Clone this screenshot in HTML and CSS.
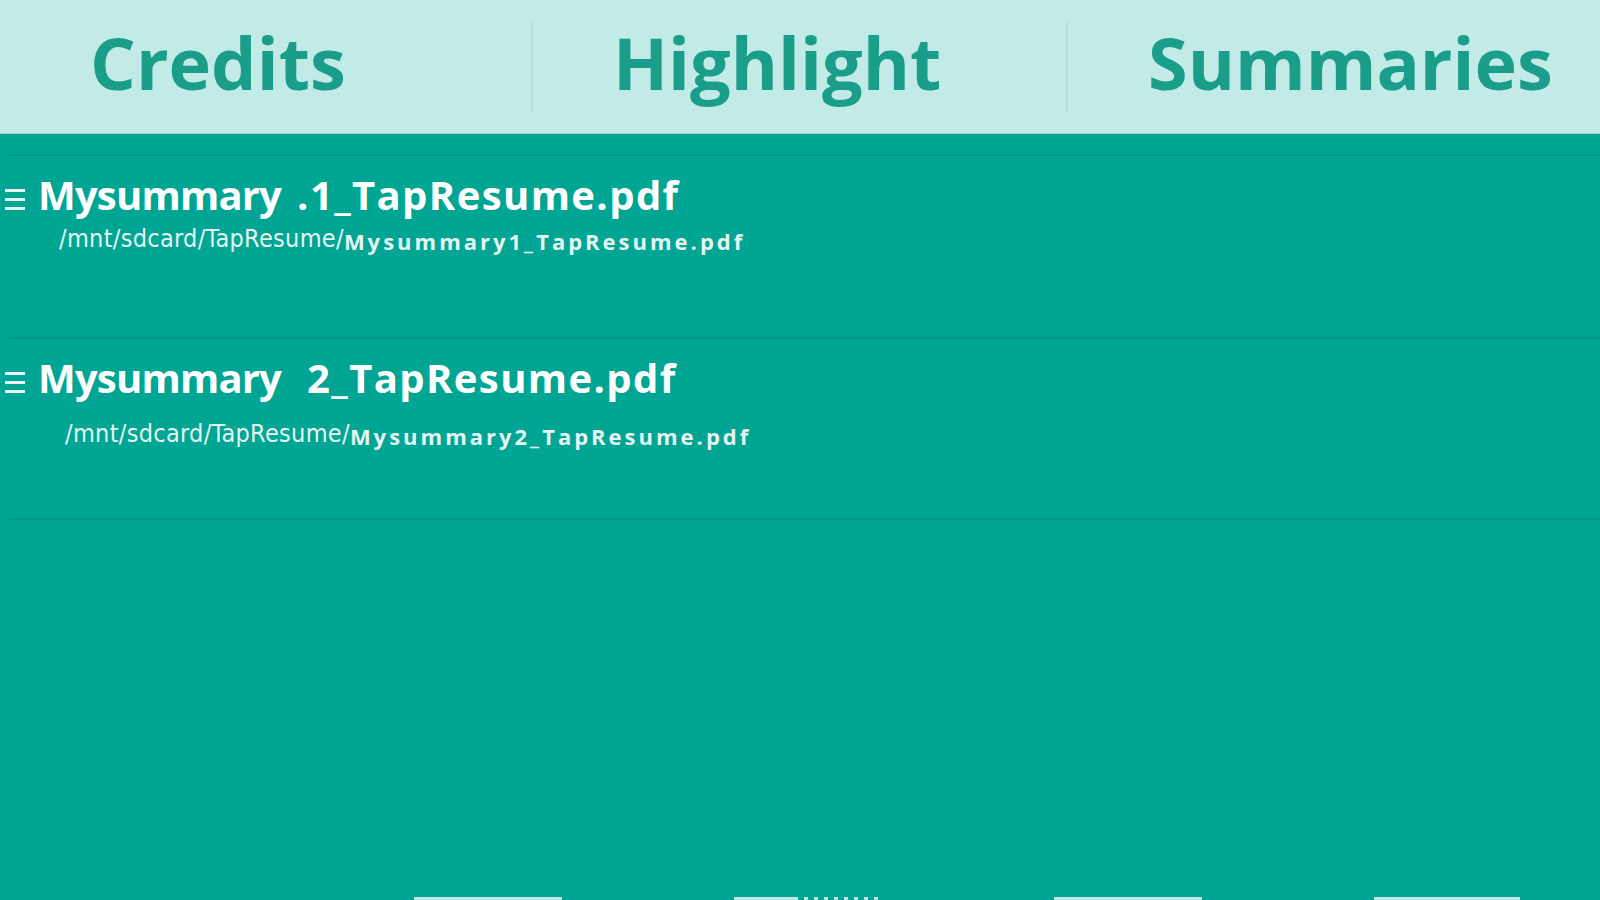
FILE: index.html
```html
<!DOCTYPE html>
<html lang="en">
<head>
  <meta charset="UTF-8" />
  <title>TapResume - Summaries</title>
  <link rel="stylesheet" href="styles.css">
</head>
<body>

<header class="tabs">
  <div class="tab tab-first">Credits</div>
  <div class="tab">Highlight</div>
  <div class="tab">Summaries</div>
</header>

<main class="list">
  <div class="row">
    <div class="row-title">
      <span class="menu-icon"><i></i><i></i><i></i></span>
      <span>Mysummary</span><span class="suffix gap-1">.1_TapResume.pdf</span>
    </div>
    <div class="row-path">
      <span class="dir">/mnt/sdcard/TapResume/</span><span class="file">Mysummary1_TapResume.pdf</span>
    </div>
  </div>
  <div class="row">
    <div class="row-title">
      <span class="menu-icon"><i></i><i></i><i></i></span>
      <span>Mysummary</span><span class="suffix gap-2">2_TapResume.pdf</span>
    </div>
    <div class="row-path row-path-2">
      <span class="dir">/mnt/sdcard/TapResume/</span><span class="file">Mysummary2_TapResume.pdf</span>
    </div>
  </div>
</main>

<footer class="navbar">
  <span class="nav-key"></span>
  <span class="nav-key nav-key-dashed"></span>
  <span class="nav-key"></span>
  <span class="nav-key"></span>
</footer>

</body>
</html>
```

FILE: styles.css
```css
body {
  font-family: 'Open Sans', 'DejaVu Sans', sans-serif;
  background-color: #00a594;
  color: white;
  margin: 0;
  padding: 0;
  height: 100vh;
  display: flex;
  flex-direction: column;
  overflow: hidden;
}

.tabs {
  background-color: #c2eae6;
  height: 133px;
  display: grid;
  grid-template-columns: 531px 535px 1fr;
  border-bottom: 1px solid #8fd5cc;
}

.tab {
  color: #1a9e8a;
  font-weight: 700;
  font-size: 72px;
  padding-left: 80px;
  border-left: 2px solid #b2ddd8;
  margin: 22px 0;
  line-height: 80px;
}

.tab-first {
  border-left: none;
  padding-left: 90px;
}

.list {
  flex: 1;
  padding-top: 20px;
}

.row {
  height: 183px;
  border-top: 2px solid #00978a;
  margin-left: 8px;
  box-sizing: border-box;
}

.row:last-child {
  border-bottom: 2px solid #00978a;
}

.row-title {
  display: flex;
  align-items: center;
  margin-left: -8px;
  padding-top: 14px;
  font-weight: 700;
  font-size: 40px;
  letter-spacing: -0.8px;
  line-height: 50px;
  white-space: nowrap;
}

.suffix {
  letter-spacing: 1.4px;
}

.gap-1 {
  margin-left: 16px;
}

.gap-2 {
  margin-left: 26px;
}

.menu-icon {
  display: flex;
  flex-direction: column;
  gap: 6px;
  width: 20px;
  margin: 8px 13px 0 5px;
}

.menu-icon i {
  display: block;
  height: 3px;
  background: #e6f6f4;
}

.row-path {
  margin-left: 51px;
  margin-top: 3px;
  white-space: nowrap;
  color: #e4f5f2;
}

.row-path-2 {
  margin-left: 57px;
  margin-top: 15px;
}

.dir {
  font-family: 'DejaVu Sans', sans-serif;
  font-stretch: condensed;
  font-size: 25px;
  letter-spacing: 0.3px;
}

.file {
  font-weight: 700;
  font-size: 22px;
  letter-spacing: 3px;
  position: relative;
  top: 3px;
}

.navbar {
  height: 3px;
  display: grid;
  grid-template-columns: 148px 148px 148px 146px;
  column-gap: 172px;
  padding-left: 414px;
}

.nav-key {
  background: #c0e8e3;
}

.nav-key-dashed {
  background: linear-gradient(to right, #c0e8e3 60px, transparent 60px),
    repeating-linear-gradient(to right, #c0e8e3 0 4px, transparent 4px 10px);
}
```
